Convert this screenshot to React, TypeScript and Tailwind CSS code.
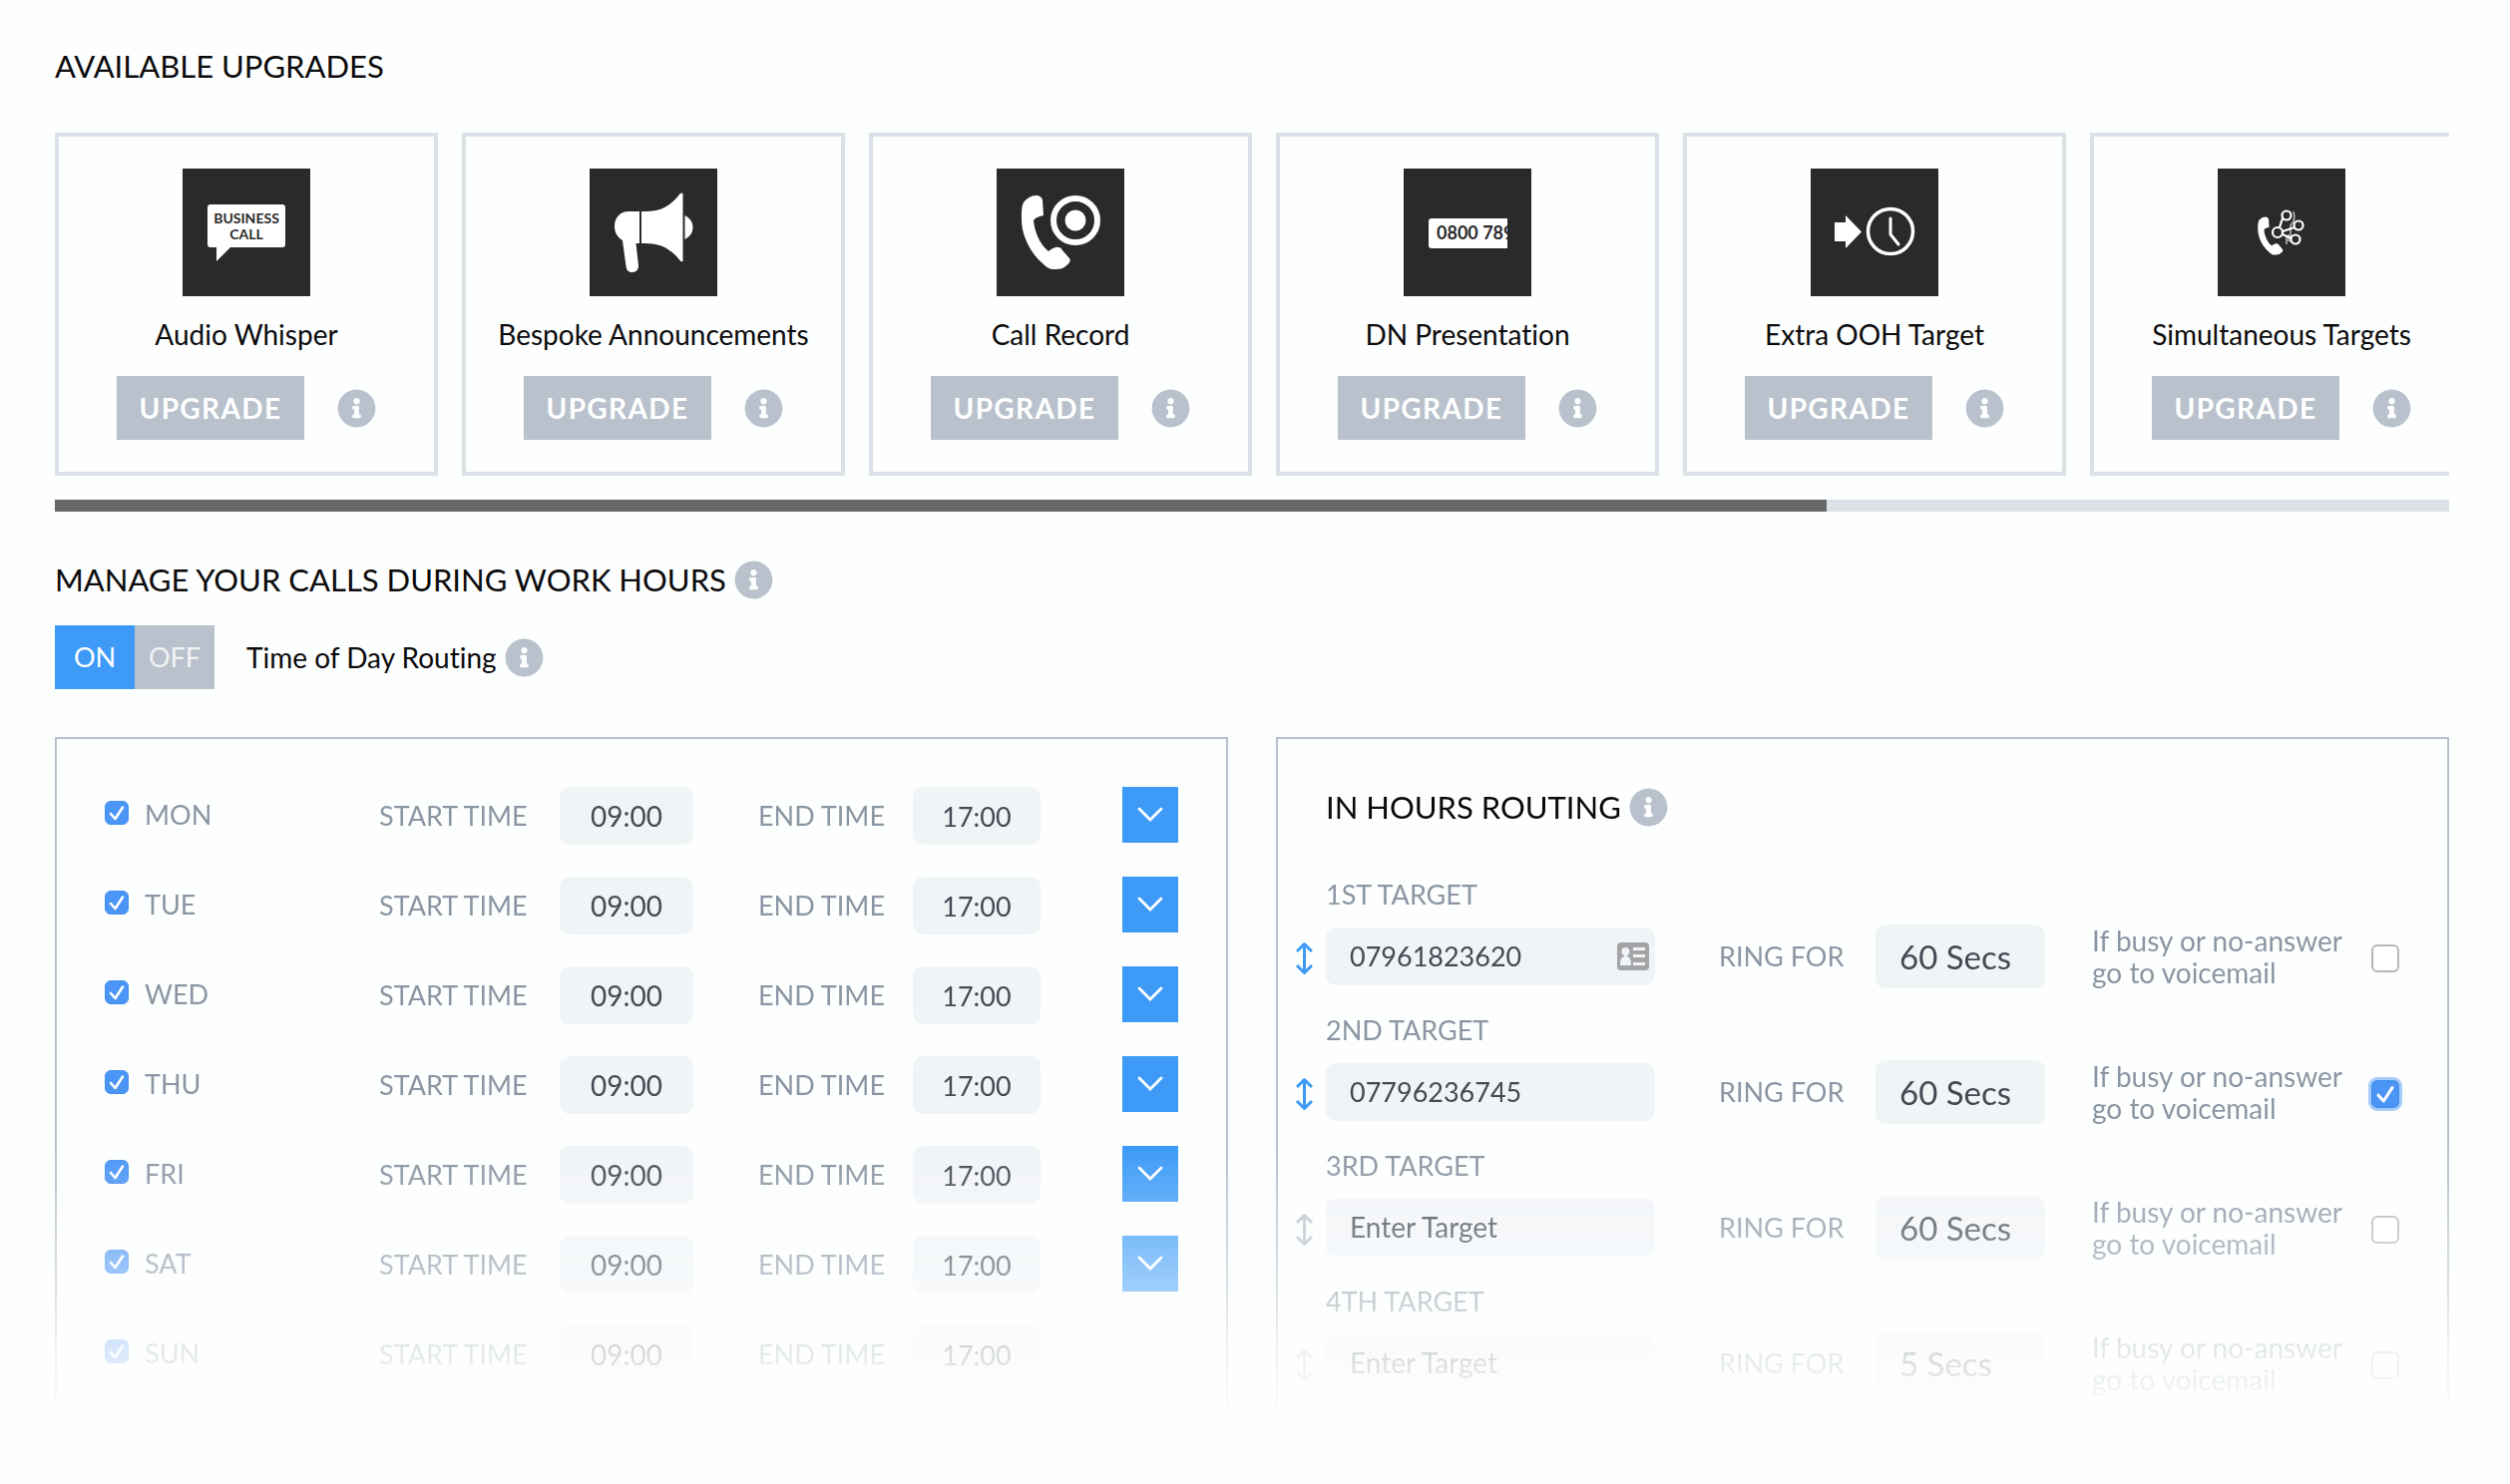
import React, { useState } from "react";
import { FaInfoCircle } from "react-icons/fa";

const HANDSET =
  "M39 27C43 27 46 29 46 32L47 47C43 48 39 49 37 52C38 63 43 76 52 83C55 81 58 78 62 79C64 79 65 80 66 82L73 90C75 93 72 96 69 98C66 101 61 101 57 101C53 101 50 99 46 95C34 85 25 67 25 51C25 43 25 38 27 34C30 30 35 27 39 27Z";

const WhisperIcon = () => (
  <svg viewBox="0 0 128 128" className="size-32 bg-[#2a2a2b]" fill="white">
    <rect x="25" y="36" width="78" height="43" rx="3" />
    <path d="M34 78V93L49 78Z" />
    <g fill="#2a2a2b" fontSize="14" fontWeight="700" textAnchor="middle">
      <text x="64" y="55">BUSINESS</text>
      <text x="64" y="71">CALL</text>
    </g>
  </svg>
);

const AnnouncementIcon = () => (
  <svg viewBox="0 0 128 128" className="size-32 bg-[#2a2a2b]" fill="white">
    <path d="M50 43H39C31 43 25 49 25 58C25 64 28 69 33 72L36.500 98C37 102 39 104 43 104C47 104 49 101 49 97.500L46.500 75H50Z" />
    <path d="M52 43C70 44 81 38 90 26C91.500 24.500 93.500 24 93.500 25.500V92.500C93.500 94 91.500 93.500 90 91.500C81 80 70 74 52 75Z" />
    <path d="M95.500 47C101 50 103.500 54 103.500 59C103.500 64 101 68 95.500 71Z" />
  </svg>
);

const RecordIcon = () => (
  <svg viewBox="0 0 128 128" className="size-32 bg-[#2a2a2b]" fill="white">
    <path d={HANDSET} />
    <circle cx="79" cy="52" r="22" fill="none" stroke="white" strokeWidth="6" />
    <circle cx="79" cy="52" r="10.500" />
  </svg>
);

const PresentationIcon = () => (
  <svg viewBox="0 0 128 128" className="size-32 bg-[#2a2a2b]" fill="white">
    <clipPath id="dn-clip">
      <rect x="24" y="50" width="80" height="30" />
    </clipPath>
    <g clipPath="url(#dn-clip)">
      <rect x="25" y="50" width="110" height="30" rx="3" />
      <text x="33" y="71" fill="#2a2a2b" fontSize="18" fontWeight="700">0800 789</text>
    </g>
  </svg>
);

const OutOfHoursIcon = () => (
  <svg viewBox="0 0 128 128" className="size-32 bg-[#2a2a2b]" fill="white">
    <path d="M24 54H35V47L51 63.500L35 80V73H24Z" />
    <g fill="none" stroke="white" strokeLinecap="round">
      <circle cx="80" cy="63" r="22.500" strokeWidth="3.500" />
      <path d="M80 50V66L88 76" strokeWidth="3" strokeLinejoin="round" />
    </g>
  </svg>
);

const SimultaneousIcon = () => (
  <svg viewBox="0 0 128 128" className="size-32 bg-[#2a2a2b]" fill="white">
    <path d={HANDSET} transform="translate(27.400 34.600) scale(.515)" />
    <g fill="none" stroke="white" strokeWidth="2.200">
      <circle cx="69" cy="47" r="4.500" />
      <circle cx="81" cy="57" r="4.500" />
      <circle cx="60" cy="64" r="5" />
      <circle cx="78" cy="71" r="4.500" />
      <path d="M65 50L62 59M65 63L77 59M65 66L74 70" />
      <path d="M76 43C78 49 77 53 73 57V74M69 67V76M71 66V73" strokeWidth="1.500" opacity=".7" />
    </g>
  </svg>
);

const upgrades = [
  { name: "Audio Whisper", Icon: WhisperIcon },
  { name: "Bespoke Announcements", Icon: AnnouncementIcon },
  { name: "Call Record", Icon: RecordIcon },
  { name: "DN Presentation", Icon: PresentationIcon },
  { name: "Extra OOH Target", Icon: OutOfHoursIcon },
  { name: "Simultaneous Targets", Icon: SimultaneousIcon },
];

const days = ["MON", "TUE", "WED", "THU", "FRI", "SAT", "SUN"];

const targets = [
  { label: "1ST TARGET", number: "07961823620", ring: "60 Secs", voicemail: false },
  { label: "2ND TARGET", number: "07796236745", ring: "60 Secs", voicemail: true },
  { label: "3RD TARGET", number: "", ring: "60 Secs", voicemail: false },
  { label: "4TH TARGET", number: "", ring: "5 Secs", voicemail: false },
];

function Info({ about }: { about: string }) {
  return (
    <button type="button" aria-label={`About ${about}`} className="shrink-0 text-[#b9c1cd]">
      <FaInfoCircle className="size-[39px]" />
    </button>
  );
}

function UpgradeCard({ name, Icon }: { name: string; Icon: React.ComponentType }) {
  return (
    <li className="flex h-[344px] w-96 shrink-0 flex-col items-center border-4 border-[#dae1e7] pt-8">
      <Icon />
      <h3 className="mt-[18px] text-[28px] leading-10 whitespace-nowrap">{name}</h3>
      <div className="mt-[22px] flex items-center gap-[33px]">
        <button type="button" className="h-16 w-[188px] bg-[#b9c1cd] text-[28px] font-bold tracking-wider text-white">
          UPGRADE
        </button>
        <Info about={name} />
      </div>
    </li>
  );
}

function DayRow({ day }: { day: string }) {
  const [open, setOpen] = useState(true);
  const id = day.toLowerCase();
  return (
    <div className="grid h-[58px] grid-cols-[275fr_181fr_199fr_155fr_210fr_56px] items-center">
      <label className="flex h-14 items-center gap-4 self-start">
        <span className="mb-1 grid size-6 shrink-0">
          <input
            type="checkbox"
            checked={open}
            onChange={() => setOpen(!open)}
            className="peer col-start-1 row-start-1 size-6 appearance-none rounded-md border border-gray-400 checked:border-[#4490f0] checked:bg-[#4a95f5]"
          />
          <svg viewBox="0 0 24 24" className="pointer-events-none invisible col-start-1 row-start-1 size-6 peer-checked:visible">
            <path d="M6 13L10.500 18L18 6.500" fill="none" stroke="white" strokeWidth="2.600" strokeLinecap="round" strokeLinejoin="round" />
          </svg>
        </span>
        {day}
      </label>
      <label htmlFor={`${id}-start`}>START TIME</label>
      <input id={`${id}-start`} type="text" defaultValue="09:00" className="h-[58px] w-[134px] rounded-[10px] bg-[#f1f4f7] text-center text-[28px] text-[#424a54]" />
      <label htmlFor={`${id}-end`}>END TIME</label>
      <input id={`${id}-end`} type="text" defaultValue="17:00" className="h-[58px] w-32 rounded-[10px] bg-[#f1f4f7] text-center text-[#424a54]" />
      {/* sunday is the last row, nothing below it to copy to */}
      {day !== "SUN" && (
        <button type="button" aria-label={`Copy ${day} down`} className="grid size-14 place-items-center self-start bg-[#3d9bf7]">
          <svg viewBox="0 0 28 20" className="h-5 w-7">
            <path d="M3 4L14 15L25 4" fill="none" stroke="white" strokeWidth="2.800" strokeLinecap="round" />
          </svg>
        </button>
      )}
    </div>
  );
}

function TargetRow({ label, number, ring, voicemail }: (typeof targets)[number]) {
  const [checked, setChecked] = useState(voicemail);
  const id = label.slice(0, 3).toLowerCase();
  return (
    <div>
      <label htmlFor={`${id}-number`} className="mb-[14px] block">{label}</label>
      <div className="grid h-16 grid-cols-[394fr_157fr_217fr_280fr_28px] items-center">
        <div className="-ml-[31px] flex items-center gap-3">
          <svg viewBox="0 0 19 34" className={number ? "mt-1 w-[19px] text-[#3d9bf7]" : "mt-1 w-[19px] text-[#b9c1cd]"}>
            <path d="M9.500 3V31M2 10L9.500 2.500L17 10M2 24L9.500 31.500L17 24" fill="none" stroke="currentColor" strokeWidth="3" strokeLinejoin="round" />
          </svg>
          <div className="flex h-[58px] w-[330px] items-center rounded-[10px] bg-[#f1f4f7] pr-[6px] pl-6">
            <input
              id={`${id}-number`}
              type="text"
              defaultValue={number}
              placeholder="Enter Target"
              className="w-full min-w-0 text-[#424a54] outline-none placeholder:text-[28px] placeholder:text-[#424a54]"
            />
            {label === "1ST TARGET" && (
              <svg viewBox="0 0 32 28" className="w-8 shrink-0">
                <rect width="32" height="28" rx="4" fill="#a3a4a6" />
                <g fill="#f1f4f7">
                  <circle cx="8.500" cy="9" r="4" />
                  <path d="M7 11H10V14C13 15 14 17 14 23H3C3 17 4 15 7 14Z" />
                  <path d="M16 5H28V8H16ZM16 12H28V15H16ZM16 20H28V23H16Z" />
                </g>
              </svg>
            )}
          </div>
        </div>
        <label htmlFor={`${id}-ring`}>RING FOR</label>
        <select id={`${id}-ring`} defaultValue={ring} className="h-16 w-[170px] appearance-none rounded-[10px] bg-[#f1f4f7] pl-6 text-[33px] text-[#424a54]">
          <option>{ring}</option>
        </select>
        <label htmlFor={`${id}-voicemail`} className="text-[28px]">
          If busy or no-answer
          <br />
          go to voicemail
        </label>
        <span className="mt-1 grid size-7">
          <input
            id={`${id}-voicemail`}
            type="checkbox"
            checked={checked}
            onChange={() => setChecked(!checked)}
            className="peer col-start-1 row-start-1 size-7 appearance-none rounded-md border-2 border-[#b4b6ba] bg-white checked:border-[#4490f0] checked:bg-[#4a95f5] checked:ring-3 checked:ring-[#a5cbf9]"
          />
          <svg viewBox="0 0 24 24" className="pointer-events-none invisible col-start-1 row-start-1 size-7 peer-checked:visible">
            <path d="M6 13L10.500 18L18 6.500" fill="none" stroke="white" strokeWidth="2.600" strokeLinecap="round" strokeLinejoin="round" />
          </svg>
        </span>
      </div>
    </div>
  );
}

export default function App() {
  const [routing, setRouting] = useState(true);

  return (
    <main className="min-h-screen bg-[#fdfefe] pt-[46px] pr-[61px] pl-[55px] font-['Lato','Open_Sans',sans-serif] text-[27px] leading-8 text-[#0b0b0c] [font-variant-ligatures:none]">
      <h2 className="text-[31px] leading-10">AVAILABLE UPGRADES</h2>
      <ul className="mt-[47px] flex gap-6 overflow-hidden">
        {upgrades.map((u) => (
          <UpgradeCard key={u.name} {...u} />
        ))}
      </ul>
      <div className="mt-6 h-3 bg-[#dae1e7]">
        <div className="h-3 w-[74%] bg-[#666769]" />
      </div>

      <div className="mt-12 flex items-center gap-2">
        <h2 className="text-[31px] leading-10">MANAGE YOUR CALLS DURING WORK HOURS</h2>
        <Info about="work hours" />
      </div>
      <div className="mt-[26px] flex items-center">
        <button type="button" aria-pressed={routing} onClick={() => setRouting(true)} className="h-16 w-20 bg-[#3d9bf7] text-white">
          ON
        </button>
        <button type="button" aria-pressed={!routing} onClick={() => setRouting(false)} className="h-16 w-20 bg-[#b9c1cd] text-white/80">
          OFF
        </button>
        <span className="mr-2 ml-8 text-[28px]">Time of Day Routing</span>
        <Info about="time of day routing" />
      </div>

      {/* both panels fade out towards the bottom */}
      <div className="mt-12 grid h-[692px] grid-cols-2 gap-12 overflow-hidden mask-[linear-gradient(to_bottom,black_410px,rgba(0,0,0,0.48)_556px,rgba(0,0,0,0.22)_610px,transparent_692px)] text-[#8a96a3]">
        <section className="flex flex-col gap-8 border-2 border-b-0 border-[#b9c1d0] p-12">
          {days.map((day) => (
            <DayRow key={day} day={day} />
          ))}
        </section>
        <section className="flex flex-col gap-[26px] border-2 border-b-0 border-[#b9c1d0] p-12">
          <div className="mb-[26px] flex items-center gap-2 text-[#0b0b0c]">
            <h2 className="text-[31px] leading-10">IN HOURS ROUTING</h2>
            <Info about="in hours routing" />
          </div>
          {targets.map((t) => (
            <TargetRow key={t.label} {...t} />
          ))}
        </section>
      </div>
    </main>
  );
}
